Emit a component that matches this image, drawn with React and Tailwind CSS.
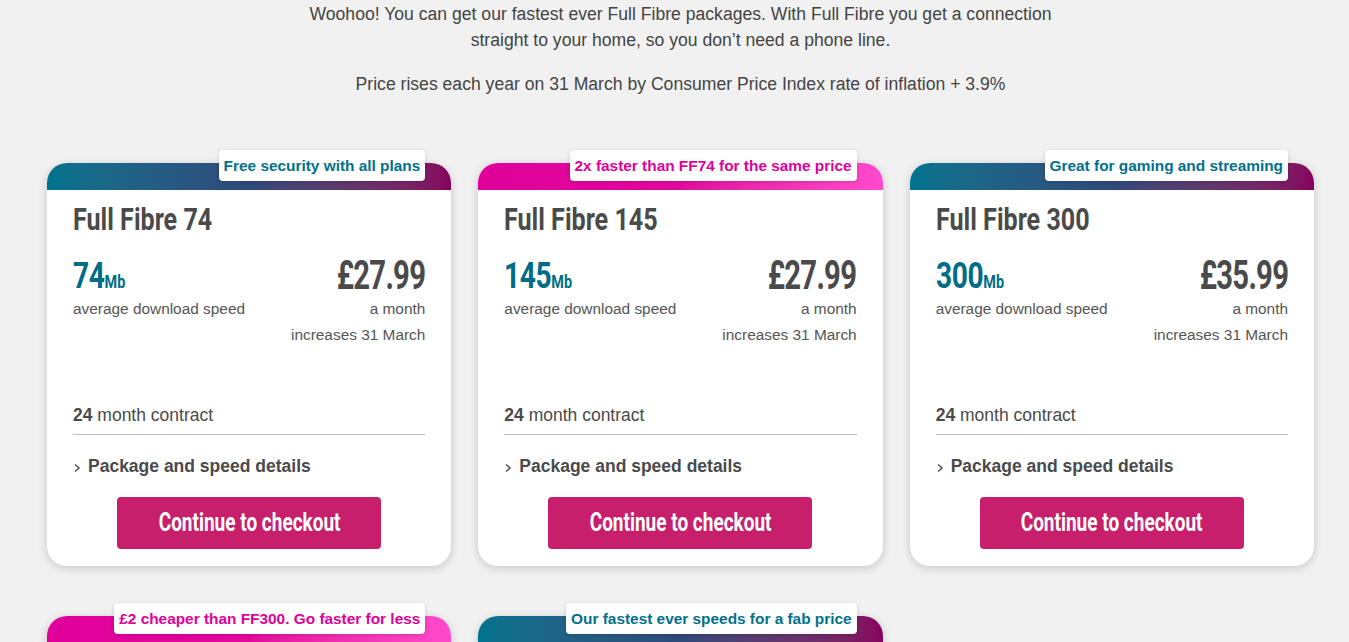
import React from "react";

const plans = [
  {
    name: "Full Fibre 74",
    speed: "74",
    price: "£27.99",
    badge: "Free security with all plans",
    tone: "teal",
  },
  {
    name: "Full Fibre 145",
    speed: "145",
    price: "£27.99",
    badge: "2x faster than FF74 for the same price",
    tone: "pink",
  },
  {
    name: "Full Fibre 300",
    speed: "300",
    price: "£35.99",
    badge: "Great for gaming and streaming",
    tone: "teal",
  },
  {
    name: "Full Fibre 500",
    speed: "500",
    price: "£37.99",
    badge: "£2 cheaper than FF300. Go faster for less",
    tone: "pink",
  },
  {
    name: "Full Fibre 900",
    speed: "900",
    price: "£39.99",
    badge: "Our fastest ever speeds for a fab price",
    tone: "teal",
  },
];

// no condensed face installed, so squeeze Roboto bold horizontally
const display = "font-['Roboto',sans-serif] font-bold inline-block whitespace-nowrap";

function Chevron() {
  return (
    <svg width="8" height="10" viewBox="0 0 8 10" className="mr-[7px] mt-[3px]">
      <polyline
        points="2,1.5 6,5 2,8.5"
        fill="none"
        stroke="#4a4a4a"
        strokeWidth="1.4"
      />
    </svg>
  );
}

function PlanCard({ plan }) {
  const band =
    plan.tone === "teal"
      ? "bg-gradient-to-r from-[#00738e] via-[#2e4a7a] to-[#86005f]"
      : "bg-gradient-to-r from-[#e0009b] via-[#e3089e] to-[#ff4acb]";
  const badgeText = plan.tone === "teal" ? "text-[#00718c]" : "text-[#e0009b]";

  return (
    <div className="relative rounded-[20px] bg-white shadow-[0_2px_10px_rgba(0,0,0,0.18)]">
      <div className={`h-[27px] rounded-t-[20px] ${band}`} />
      <div
        className={`absolute top-[-13px] right-[26px] h-[31px] px-[5px] rounded-[4px] bg-white shadow-[0_1px_4px_rgba(0,0,0,0.15)] flex items-center text-[15.4px] font-bold whitespace-nowrap ${badgeText}`}
      >
        {plan.badge}
      </div>
      <div className="px-[26px] pt-[12px] pb-[17px]">
        <h2 className="h-[36px] leading-[36px] text-[#4a4a4a]">
          <span className={`${display} text-[31px] scale-x-[0.81] origin-left`}>
            {plan.name}
          </span>
        </h2>
        <div className="mt-[18px] flex justify-between">
          <div>
            <div className="h-[40px] leading-[40px] text-[#006d88]">
              <span className={`${display} scale-x-[0.76] origin-left`}>
                <span className="text-[37px] tracking-[-0.5px]">{plan.speed}</span>
                <span className="text-[19px]">Mb</span>
              </span>
            </div>
            <div className="text-[15.4px] leading-[26px] text-[#555]">
              average download speed
            </div>
          </div>
          <div className="text-right">
            <div className="h-[40px] leading-[40px] text-[#4a4a4a]">
              <span
                className={`${display} text-[40px] tracking-[-1px] scale-x-[0.73] origin-right`}
              >
                {plan.price}
              </span>
            </div>
            <div className="text-[15.4px] leading-[26px] text-[#555]">a month</div>
            <div className="text-[15.4px] leading-[26px] text-[#555]">
              increases 31 March
            </div>
          </div>
        </div>
        <div className="mt-[54px] pb-[6px] border-b border-[#bdbdbd] text-[17.5px] leading-[26px] text-[#4a4a4a]">
          <span className="font-bold">24</span> month contract
        </div>
        <div className="mt-[18px] flex items-center text-[17.5px] leading-[26px] font-bold text-[#4a4a4a]">
          <Chevron />
          Package and speed details
        </div>
        <div className="mt-[18px] flex justify-center">
          <button
            type="button"
            className="w-[264px] h-[52px] rounded-[4px] bg-[#c71f6b] text-white flex items-center justify-center"
          >
            <span className={`${display} text-[25px] scale-x-[0.76] origin-center`}>
              Continue to checkout
            </span>
          </button>
        </div>
      </div>
    </div>
  );
}

export default function App() {
  return (
    <div className="min-h-screen bg-[#f1f1f1] font-['Liberation_Sans',Arial,sans-serif]">
      <div className="ml-[47px] w-[1267px] pt-[1px]">
        <div className="text-center text-[17.6px] leading-[26px] text-[#444]">
          <p>
            Woohoo! You can get our fastest ever Full Fibre packages. With Full
            Fibre you get a connection
            <br />
            straight to your home, so you don’t need a phone line.
          </p>
          <p className="mt-[18px]">
            Price rises each year on 31 March by Consumer Price Index rate of
            inflation + 3.9%
          </p>
        </div>
        <div className="mt-[66px] grid grid-cols-3 gap-x-[27px] gap-y-[50px] pb-[40px]">
          {plans.map((p) => (
            <PlanCard key={p.name} plan={p} />
          ))}
        </div>
      </div>
    </div>
  );
}
